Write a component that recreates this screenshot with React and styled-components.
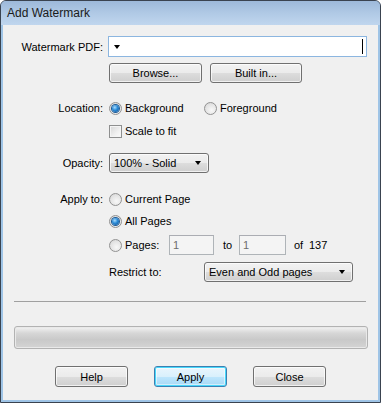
import React from "react";
import styled, { createGlobalStyle, css } from "styled-components";

const Global = createGlobalStyle`
  html, body { margin: 0; padding: 0; background: #ffffff; }
  body { font-family: "Liberation Sans", Arial, sans-serif; font-size: 11px; color: #000; }
`;

const Window = styled.div`
  width: 381px;
  height: 403px;
  box-sizing: border-box;
  border: 1px solid #3a4350;
  border-radius: 6px 6px 0 0;
  display: flex;
  flex-direction: column;
  overflow: hidden;
  background: #9fc4e6;
`;

const TitleBar = styled.div`
  height: 24px;
  flex: none;
  display: flex;
  align-items: center;
  padding-left: 6px;
  font-size: 12px;
  color: #1a1a1a;
  background: linear-gradient(#9db9da 0%, #b0c9e5 50%, #c0d6ee 100%);
`;

const Body = styled.div`
  flex: 1;
  margin: 0 2px 2px 2px;
  background: #f0f0f0;
  display: flex;
  flex-direction: column;
  padding-top: 11px;
`;

const FormRow = styled.div`
  display: grid;
  grid-template-columns: 100px 1fr;
  column-gap: 5px;
  align-items: center;
  height: ${(p) => p.h || 20}px;
  margin-top: ${(p) => p.mt || 0}px;
`;

const Label = styled.div`
  text-align: right;
  white-space: nowrap;
`;

const Controls = styled.div`
  display: flex;
  align-items: center;
  gap: ${(p) => p.gap || 0}px;
  padding-left: ${(p) => p.pl || 0}px;
`;

const PdfInput = styled.div`
  width: 259px;
  height: 21px;
  box-sizing: border-box;
  border: 1px solid #8cb6e0;
  background: #fff;
  display: flex;
  align-items: center;
  justify-content: space-between;
  padding: 0 3px 0 5px;
`;

const Caret = styled.span`
  width: 1px;
  height: 15px;
  background: #000;
`;

const Arrow = styled.span`
  width: 0;
  height: 0;
  border-left: 3.5px solid transparent;
  border-right: 3.5px solid transparent;
  border-top: 4px solid #000;
`;

const buttonLook = css`
  box-sizing: border-box;
  border: 1px solid #707070;
  border-radius: 3px;
  background: linear-gradient(#f2f2f2 0%, #ebebeb 50%, #dddddd 51%, #cfcfcf 100%);
  box-shadow: inset 0 0 0 1px rgba(255, 255, 255, 0.7);
  font-family: "Liberation Sans", Arial, sans-serif;
  font-size: 11px;
  color: #000;
`;

const Button = styled.div`
  ${buttonLook};
  width: ${(p) => p.w || 73}px;
  height: ${(p) => p.h || 21}px;
  display: flex;
  align-items: center;
  justify-content: center;
  ${(p) =>
    p.primary &&
    css`
      border-color: #3c7fb1;
      box-shadow: inset 0 0 0 1px #48d8fb, inset 0 0 0 2px rgba(255, 255, 255, 0.5);
      background: linear-gradient(#eaf6fd 0%, #d9f0fc 50%, #bee6fd 51%, #a7d9f5 100%);
    `}
`;

const Select = styled.div`
  ${buttonLook};
  width: ${(p) => p.w}px;
  height: 20px;
  display: flex;
  align-items: center;
  justify-content: space-between;
  padding: 0 7px 0 4px;
`;

const RadioDot = styled.span`
  width: 13px;
  height: 13px;
  box-sizing: border-box;
  border-radius: 50%;
  border: 1px solid #929292;
  flex: none;
  display: flex;
  align-items: center;
  justify-content: center;
  background: radial-gradient(circle at 60% 65%, #f8f8f8 0%, #e3e3e3 60%, #cfcfcf 100%);
  &::after {
    content: "";
    display: ${(p) => (p.checked ? "block" : "none")};
    width: 7px;
    height: 7px;
    border-radius: 50%;
    background: radial-gradient(circle at 40% 35%, #a8dcff 0%, #2a8ad6 45%, #0b4a8e 100%);
    box-shadow: 0 0 0 1px #1c5a96;
  }
`;

const Choice = styled.div`
  display: flex;
  align-items: center;
  gap: 3px;
  white-space: nowrap;
  width: ${(p) => (p.w ? `${p.w}px` : "auto")};
  flex: none;
`;

const CheckBox = styled.span`
  width: 13px;
  height: 13px;
  box-sizing: border-box;
  border: 1px solid #8e8f8f;
  background: linear-gradient(135deg, #d6d6d6 0%, #f0f0f0 60%, #fbfbfb 100%);
  box-shadow: inset 0 0 0 1px #f4f4f4;
  flex: none;
`;

const SmallInput = styled.div`
  width: ${(p) => p.w}px;
  height: 20px;
  box-sizing: border-box;
  border: 1px solid #afb4b8;
  border-top-color: #abadb3;
  background: #f4f4f4;
  color: #6d6d6d;
  display: flex;
  align-items: center;
  padding-left: 3px;
  flex: none;
`;

const Text = styled.span`
  white-space: nowrap;
  flex: none;
  width: ${(p) => (p.w ? `${p.w}px` : "auto")};
`;

const Separator = styled.div`
  height: 1px;
  background: #a0a0a0;
  margin: 19px 12px 0 11px;
`;

const Progress = styled.div`
  height: 23px;
  margin: 24px 10px 0 11px;
  box-sizing: border-box;
  border: 1px solid #b2b2b2;
  border-radius: 3px;
  background: linear-gradient(#f3f3f3 0%, #d6d6d6 30%, #c9c9c9 60%, #d4d4d4 100%);
  box-shadow: inset 0 0 0 1px #e9e9e9;
`;

const ButtonBar = styled.div`
  display: flex;
  justify-content: center;
  gap: 26px;
  margin-top: 17px;
`;

export default function App() {
  return (
    <>
      <Global />
      <Window>
        <TitleBar>Add Watermark</TitleBar>
        <Body>
          <FormRow h={21}>
            <Label>Watermark PDF:</Label>
            <Controls>
              <PdfInput>
                <Arrow />
                <Caret />
              </PdfInput>
            </Controls>
          </FormRow>
          <FormRow mt={6}>
            <span />
            <Controls gap={8} pl={1}>
              <Button w={93} h={20}>Browse...</Button>
              <Button w={92} h={20}>Built in...</Button>
            </Controls>
          </FormRow>
          <FormRow mt={15}>
            <Label>Location:</Label>
            <Controls pl={1}>
              <Choice w={95}>
                <RadioDot checked />
                Background
              </Choice>
              <Choice>
                <RadioDot />
                Foreground
              </Choice>
            </Controls>
          </FormRow>
          <FormRow mt={3}>
            <span />
            <Controls pl={1}>
              <Choice>
                <CheckBox />
                Scale to fit
              </Choice>
            </Controls>
          </FormRow>
          <FormRow mt={12}>
            <Label>Opacity:</Label>
            <Controls pl={1}>
              <Select w={100}>
                <span>100% - Solid</span>
                <Arrow />
              </Select>
            </Controls>
          </FormRow>
          <FormRow mt={16}>
            <Label>Apply to:</Label>
            <Controls pl={1}>
              <Choice>
                <RadioDot />
                Current Page
              </Choice>
            </Controls>
          </FormRow>
          <FormRow mt={2}>
            <span />
            <Controls pl={1}>
              <Choice>
                <RadioDot checked />
                All Pages
              </Choice>
            </Controls>
          </FormRow>
          <FormRow mt={4}>
            <span />
            <Controls pl={1}>
              <Choice w={60}>
                <RadioDot />
                Pages:
              </Choice>
              <SmallInput w={45}>1</SmallInput>
              <Text w={9} />
              <Text w={16}>to</Text>
              <SmallInput w={47}>1</SmallInput>
              <Text w={8} />
              <Text w={15}>of</Text>
              <Text>137</Text>
            </Controls>
          </FormRow>
          <FormRow mt={7}>
            <span />
            <Controls pl={1}>
              <Text w={95}>Restrict to:</Text>
              <Select w={149}>
                <span>Even and Odd pages</span>
                <Arrow />
              </Select>
            </Controls>
          </FormRow>
          <Separator />
          <Progress />
          <ButtonBar>
            <Button>Help</Button>
            <Button primary>Apply</Button>
            <Button>Close</Button>
          </ButtonBar>
        </Body>
      </Window>
    </>
  );
}
